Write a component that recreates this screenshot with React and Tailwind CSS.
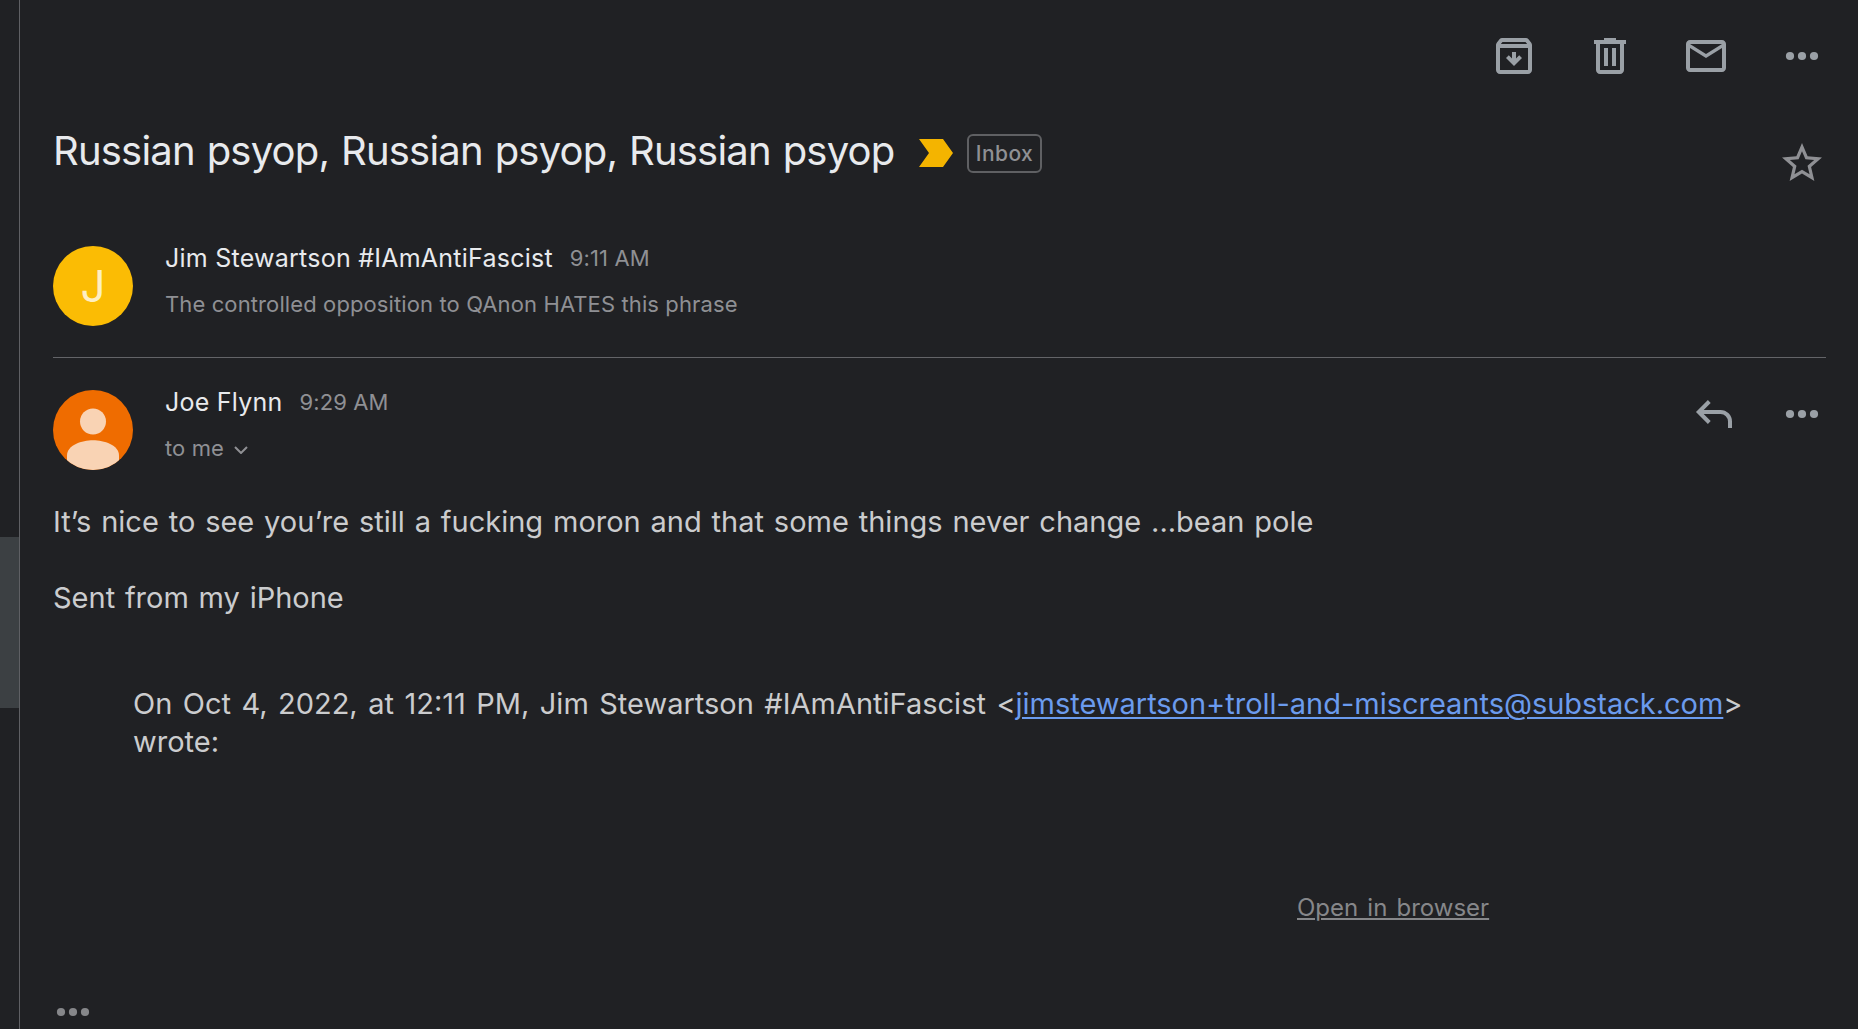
import React from 'react';

const archivePath =
  'M20.54 5.23l-1.39-1.68C18.88 3.21 18.47 3 18 3H6c-.47 0-.88.21-1.16.55L3.46 5.23C3.17 5.57 3 6.02 3 6.5V19c0 1.1.9 2 2 2h14c1.1 0 2-.9 2-2V6.5c0-.48-.17-.93-.46-1.27zM6.24 5h11.52l.83 1H5.42l.82-1zM5 19V8h14v11H5zM16 13l-1.4-1.4-1.6 1.6V10h-2v3.2l-1.6-1.6L8 13l4 4z';
const trashPath =
  'M15 4V3H9v1H4v2h1v13c0 1.1.9 2 2 2h10c1.1 0 2-.9 2-2V6h1V4h-5zm2 15H7V6h10v13zM9 8h2v9H9zm4 0h2v9h-2z';
const mailPath =
  'M22 6c0-1.1-.9-2-2-2H4c-1.1 0-2 .9-2 2v12c0 1.1.9 2 2 2h16c1.1 0 2-.9 2-2V6zm-2 0l-8 5-8-5h16zm0 12H4V8l8 5 8-5v10z';
const starPath =
  'M22 9.24l-7.19-.62L12 2 9.19 8.63 2 9.24l5.46 4.73L5.82 21 12 17.27 18.18 21l-1.63-7.03L22 9.24zM12 15.4l-3.76 2.27 1-4.28-3.32-2.88 4.38-.38L12 6.1l1.71 4.04 4.38.38-3.32 2.88 1 4.28L12 15.4z';

function Icon({ d, label, className = 'text-[#9aa0a6]' }) {
  return (
    <button type="button" aria-label={label} className={className}>
      <svg viewBox="0 0 24 24" fill="currentColor" fillRule="evenodd" className="block size-12">
        <path d={d} />
      </svg>
    </button>
  );
}

function Dots({ className = 'text-[#9aa0a6]' }) {
  return (
    <button type="button" aria-label="More" className={className}>
      <svg viewBox="0 0 48 48" fill="currentColor" className="block size-12">
        <circle cx="12" cy="24" r="4.1" />
        <circle cx="24" cy="24" r="4.1" />
        <circle cx="36" cy="24" r="4.1" />
      </svg>
    </button>
  );
}

function ReplyIcon() {
  return (
    <button type="button" aria-label="Reply" className="text-[#9aa0a6]">
      <svg viewBox="0 0 48 48" fill="none" stroke="currentColor" strokeWidth="4" className="block size-12">
        <path d="M19.3 11.5L8.8 22l10.5 10.5" />
        <path d="M9 22h21.500a9.500 9.500 0 0 1 9.500 9.500V38" />
      </svg>
    </button>
  );
}

function PersonAvatar() {
  return (
    <div className="mt-[3px] size-20 shrink-0 overflow-hidden rounded-full bg-[#ef6c00]">
      <svg viewBox="0 0 80 80" fill="#f9d3b4" className="block size-20">
        <circle cx="40" cy="31.5" r="13" />
        <path d="M14 80V65.500C14 55 29 50.300 40 50.300S66 55 66 65.500V80z" />
      </svg>
    </div>
  );
}

function Sender({ name, time }) {
  return (
    <div className="flex whitespace-nowrap leading-[30px]">
      <span className="text-[25px] tracking-[0.24px] text-[#e8eaed]">{name}</span>
      <span className="ml-[17px] text-[22px] tracking-[0.1px] text-[#8f9094]">{time}</span>
    </div>
  );
}

function App() {
  return (
    <div className="flex h-[1029px] w-[1858px] overflow-hidden bg-[#202124] font-['Inter',sans-serif]">
      {/* Edge of the message list, with the selected row */}
      <aside className="w-5 shrink-0 border-r border-[#5f6064] pt-[537px]">
        <div className="h-[171px] bg-[#3c4043]" />
      </aside>

      <main className="flex-1 pl-[33px] pr-8">
        <header className="flex h-28 items-center justify-end gap-12">
          <Icon d={archivePath} label="Archive" />
          <Icon d={trashPath} label="Delete" />
          <Icon d={mailPath} label="Mark as unread" />
          <Dots />
        </header>

        {/* Subject */}
        <div className="flex h-[131px] items-start">
          <h1 className="mt-[14px] w-[866px] whitespace-nowrap text-[40px] leading-[50px] tracking-[-0.8px] text-[#e8eaed] [word-spacing:1.4px]">
            Russian psyop, Russian psyop, Russian psyop
          </h1>
          <svg viewBox="0 0 34 28" className="mt-[27px] h-7 w-[34px]">
            <path d="M0 0h24l10 14-10 14H0l10-14z" fill="#f4b400" />
          </svg>
          <span className="ml-[14px] mt-[22px] flex h-[39px] w-[75px] items-center justify-center rounded-md border-2 border-[#5f6063] text-[21px] font-medium tracking-[0.4px] text-[#8f9094]">
            Inbox
          </span>
          <div className="ml-auto mt-[27px]">
            <Icon d={starPath} label="Star" className="text-[#8f9094]" />
          </div>
        </div>

        {/* Collapsed message */}
        <section className="flex h-[114px]">
          <div className="mt-[3px] flex size-20 shrink-0 items-center justify-center rounded-full bg-[#fbbc04] text-[44px] text-[#feefc3]">
            J
          </div>
          <div className="ml-8">
            <Sender name="Jim Stewartson #IAmAntiFascist" time="9:11 AM" />
            <p className="mt-[17px] whitespace-nowrap text-[22px] leading-[28px] tracking-[0.11px] text-[#8f9094]">
              The controlled opposition to QAnon HATES this phrase
            </p>
          </div>
        </section>
        <hr className="h-px w-[1773px] border-0 bg-[#636468]" />

        {/* Expanded message */}
        <section className="flex h-[131px] items-start pt-[29px]">
          <PersonAvatar />
          <div className="ml-8">
            <Sender name="Joe Flynn" time="9:29 AM" />
            <p className="mt-[17px] flex items-center text-[22px] leading-[28px] tracking-[0.11px] text-[#8f9094]">
              to me
              <svg viewBox="0 0 14 8" fill="none" stroke="currentColor" strokeWidth="2" className="ml-[10px] mt-[3px] h-2 w-[14px]">
                <path d="M1 1l6 6 6-6" />
              </svg>
            </p>
          </div>
          <div className="ml-auto mt-[3px] flex gap-10">
            <ReplyIcon />
            <Dots />
          </div>
        </section>

        <div className="pt-[14px] text-[29px] leading-[38px] text-[#cbccce]">
          <p className="[word-spacing:1.7px]">
            It’s nice to see you’re still a fucking moron and that some things never change ...bean pole
          </p>
          <p className="mt-[38px] [word-spacing:1.6px]">Sent from my iPhone</p>
          <blockquote className="ml-20 mt-[68px] whitespace-nowrap [word-spacing:2.3px]">
            On Oct 4, 2022, at 12:11 PM, Jim Stewartson #IAmAntiFascist &lt;
            <a className="tracking-[-0.02px] text-[#6b9bee] underline decoration-2 underline-offset-3">
              jimstewartson+troll-and-miscreants@substack.com
            </a>
            &gt;
            <br />
            wrote:
          </blockquote>
        </div>

        <a className="ml-[1244px] mt-[131px] block whitespace-nowrap text-[24px] leading-[32px] text-[#86878a] underline decoration-2 underline-offset-2 [word-spacing:2.4px]">
          Open in browser
        </a>
        <div className="-ml-1 mt-16">
          <Dots className="text-[#86878a]" />
        </div>
      </main>
    </div>
  );
}

export default App;
